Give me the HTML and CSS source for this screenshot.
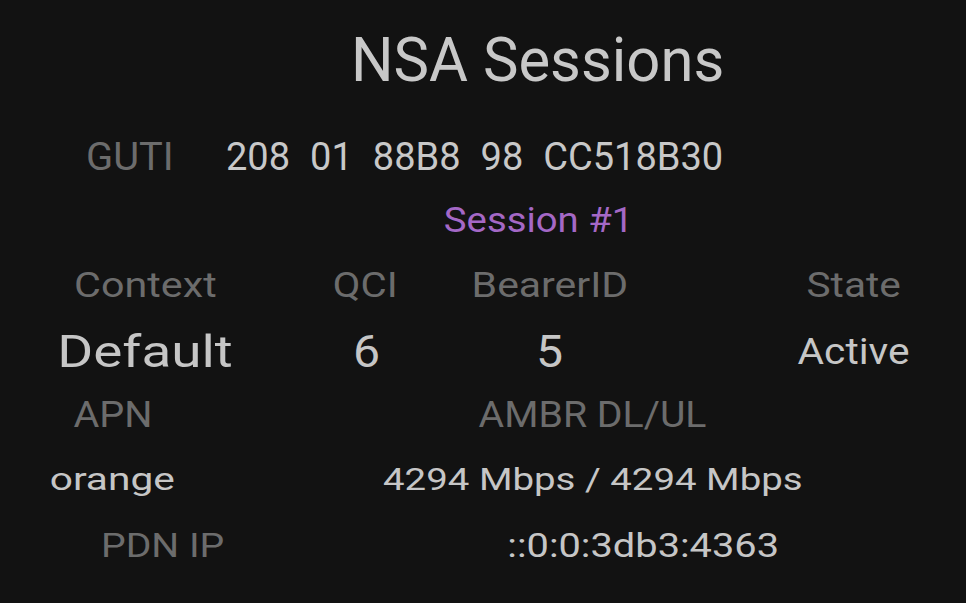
FILE: index.html
```html
<!DOCTYPE html>
<html lang="en">
<head>
<meta charset="utf-8">
<title>NSA Sessions</title>
<link rel="stylesheet" href="styles.css">
</head>
<body>
<main class="panel">
  <h1 class="title"><span class="t t-title">NSA Sessions</span></h1>
  <div class="guti-row">
    <span class="label guti-label"><span class="t t-guti">GUTI</span></span>
    <span class="guti-val">
      <span>208</span><span>01</span><span>88B8</span><span>98</span><span>CC518B30</span>
    </span>
  </div>
  <div class="session"><span class="t t-session">Session #1</span></div>
  <div class="grid4 row-labels">
    <span class="label"><span class="t t-context">Context</span></span>
    <span class="label"><span class="t t-qci">QCI</span></span>
    <span class="label"><span class="t t-bearer">BearerID</span></span>
    <span></span>
    <span class="label"><span class="t t-state">State</span></span>
  </div>
  <div class="grid4 row-values">
    <span class="value big"><span class="t t-default">Default</span></span>
    <span class="value big"><span class="t t-digit t-six">6</span></span>
    <span class="value big"><span class="t t-digit">5</span></span>
    <span></span>
    <span class="value mid"><span class="t t-active">Active</span></span>
  </div>
  <div class="grid2 row-labels2">
    <span class="label"><span class="t t-apn">APN</span></span>
    <span class="label"><span class="t t-ambr">AMBR DL/UL</span></span>
  </div>
  <div class="grid2 row-values2">
    <span class="value"><span class="t t-orange">orange</span></span>
    <span class="value"><span class="t t-rate">4294 Mbps / 4294 Mbps</span></span>
  </div>
  <div class="grid2b row-pdn">
    <span class="label"><span class="t t-pdn">PDN IP</span></span>
    <span class="value"><span class="t t-ip">::0:0:3db3:4363</span></span>
  </div>
</main>
</body>
</html>
```
FILE: styles.css
```css
html, body {
  margin: 0;
  padding: 0;
  background: #121212;
}
body {
  width: 966px;
  height: 603px;
  overflow: hidden;
  font-family: Roboto, "Noto Sans", sans-serif;
  color: #c6c6c6;
}
.panel {
  display: flex;
  flex-direction: column;
}
.t {
  display: inline-block;
  white-space: nowrap;
  transform-origin: center;
}
.label { color: #6c6c6c; }
.value { color: #c6c6c6; }

.t-title { transform: scaleX(0.964); }
.t-guti { transform: scaleX(1.05); transform-origin: left; }
.t-session { transform: scaleX(1.094); }
.t-context { transform: scaleX(1.18); }
.t-qci { transform: scaleX(1.15); }
.t-bearer { transform: scaleX(1.17); }
.t-state { transform: scaleX(1.16); }
.t-default { transform: scaleX(1.22); }
.t-digit { transform: scaleX(1.07); }
.t-six { margin-left: 4px; }
.t-active { transform: scaleX(1.13); }
.t-apn { transform: scaleX(1.1); }
.t-ambr { transform: scaleX(1.09); }
.t-orange { transform: scaleX(1.27); }
.t-rate { transform: scaleX(1.2); }
.t-pdn { transform: scaleX(1.15); }
.t-ip { transform: scaleX(1.17); }

.title {
  margin: 0;
  font-weight: 400;
  font-size: 62px;
  height: 120px;
  line-height: 120px;
  padding-left: 110px;
  text-align: center;
  color: #c8c8c8;
}
.guti-row {
  display: flex;
  height: 74px;
  line-height: 74px;
  font-size: 38px;
  padding-left: 86px;
}
.guti-label { width: 140px; }
.guti-val {
  display: flex;
  gap: 20px;
  color: #c8c8c8;
}
.session {
  height: 54px;
  line-height: 54px;
  font-size: 35px;
  padding-left: 112px;
  text-align: center;
  color: #a468c6;
}
.grid4 {
  display: grid;
  grid-template-columns: 290px 150px 220px 90px 207px;
  text-align: center;
}
.row-labels {
  height: 76px;
  line-height: 76px;
  font-size: 35px;
}
.row-values {
  height: 56px;
  line-height: 56px;
  align-items: center;
}
.big { font-size: 45px; }
.mid { font-size: 36px; }
.grid2 {
  display: grid;
  grid-template-columns: 225px 735px;
  text-align: center;
}
.row-labels2 {
  height: 71px;
  line-height: 71px;
  font-size: 36px;
}
.row-values2 {
  height: 57px;
  line-height: 57px;
  font-size: 32px;
}
.grid2b {
  display: grid;
  grid-template-columns: 325px 636px;
  text-align: center;
}
.row-pdn {
  height: 75px;
  line-height: 75px;
  font-size: 34px;
}
```
